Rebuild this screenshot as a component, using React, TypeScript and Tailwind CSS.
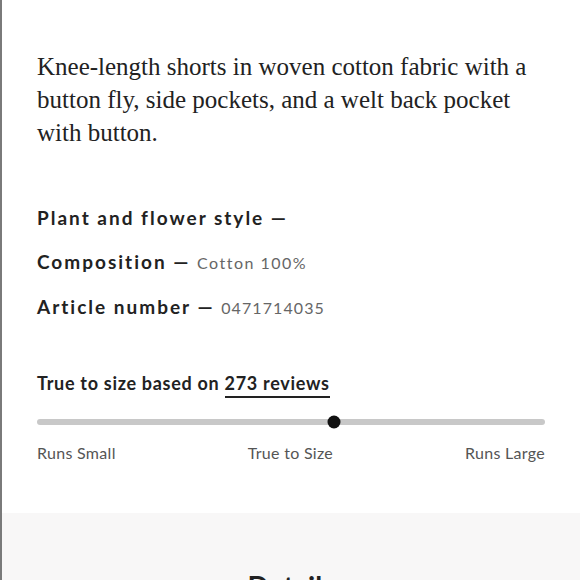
export default function App() {
  const sans = { fontFamily: '"Lato", "Liberation Sans", sans-serif' };
  return (
    <div className="w-[580px] h-[580px] overflow-hidden bg-white border-l-2 border-[#7a7a7a] flex flex-col">
      <div className="pl-[35px] pr-[30px] pt-[50px] pb-[50px]">
        <p
          className="w-[497px] text-[25px] leading-[33px] text-[#222]"
          style={{ fontFamily: '"Liberation Serif", serif' }}
        >
          Knee-length shorts in woven cotton fabric with a button fly, side pockets, and a welt back pocket with button.
        </p>
        <div className="mt-[56px] flex flex-col gap-[19px] text-[#222]" style={sans}>
          <p className="text-[19px] leading-[25px] font-bold tracking-[2px]">Plant and flower style —</p>
          <p className="text-[19px] leading-[25px] font-bold tracking-[2px]">
            Composition — <span className="font-normal text-[16px] text-[#666] tracking-[1.5px]">Cotton 100%</span>
          </p>
          <p className="text-[19px] leading-[25px] font-bold tracking-[2px]">
            Article number — <span className="font-normal text-[16px] text-[#666] tracking-[1.1px]">0471714035</span>
          </p>
        </div>
        <div className="mt-[51px] pr-[5px]" style={sans}>
          <p className="text-[18px] leading-[25px] font-bold tracking-[0.7px] text-[#222]">
            True to size based on{" "}
            <span className="border-b-2 border-[#222] pb-[2px]">273 reviews</span>
          </p>
          <div className="relative mt-[23px] h-[6px] rounded-full bg-[#c8c8c8]">
            <div className="absolute top-1/2 left-[58.5%] w-[13px] h-[13px] -translate-x-1/2 -translate-y-1/2 rounded-full bg-[#111]" />
          </div>
          <div className="mt-[18px] flex justify-between text-[16px] leading-[20px] tracking-[0.3px] text-[#555]">
            <span>Runs Small</span>
            <span>True to Size</span>
            <span>Runs Large</span>
          </div>
        </div>
      </div>
      <div className="flex-1 bg-[#f8f7f7] flex justify-center pt-[56px]">
        <h2 className="text-[28px] leading-[34px] font-bold text-[#222]" style={sans}>
          Details
        </h2>
      </div>
    </div>
  );
}
